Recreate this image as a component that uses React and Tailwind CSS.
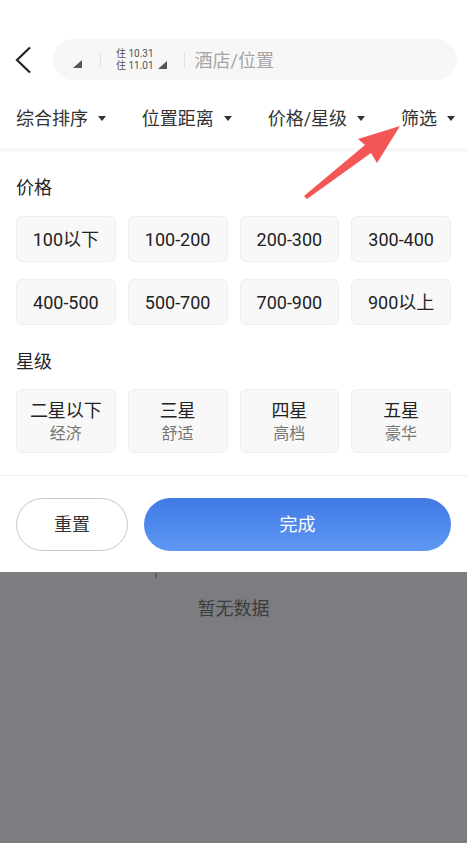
import React from "react";

const prices = ["100以下", "100-200", "200-300", "300-400", "400-500", "500-700", "700-900", "900以上"];
const stars = [
    { name: "二星以下", sub: "经济" },
    { name: "三星", sub: "舒适" },
    { name: "四星", sub: "高档" },
    { name: "五星", sub: "豪华" },
];
const tabs = ["综合排序", "位置距离", "价格/星级", "筛选"];

const Corner = () => (
    <svg width="9" height="8" viewBox="0 0 9 8" className="shrink-0">
        <polygon points="9,0 9,8 0,8" fill="#555" />
    </svg>
);

const Caret = () => (
    <svg width="8" height="5" viewBox="0 0 8 5" className="shrink-0">
        <polygon points="0,0 8,0 4,5" fill="#333" />
    </svg>
);

const App = () => {
    return (
        <div className="relative w-[467px] h-[843px] bg-white flex flex-col overflow-hidden font-['Roboto','Noto_Sans_CJK_SC',sans-serif]">
            {/* Header */}
            <div className="flex items-center pt-[39px] pl-[14px] pr-[10px]">
                <svg width="20" height="28" viewBox="0 0 20 28" className="shrink-0">
                    <polyline points="16,1.5 3,14 16,26.5" fill="none" stroke="#222" strokeWidth="2.2" />
                </svg>
                <div className="ml-[19px] flex-1 h-[41px] rounded-full bg-[#f7f7f7] flex items-center">
                    <div className="ml-[20px] mt-[9px]">
                        <Corner />
                    </div>
                    <div className="ml-[18px] w-px h-[16px] bg-[#e2e2e2]" />
                    <div className="ml-[15px] flex items-center">
                        <div className="flex flex-col text-[10px] leading-[12px] text-[#555]">
                            <span>住 10.31</span>
                            <span>住 11.01</span>
                        </div>
                        <div className="ml-[4px] mt-[10px]">
                            <Corner />
                        </div>
                    </div>
                    <div className="ml-[17px] w-px h-[16px] bg-[#e2e2e2]" />
                    <span className="ml-[10px] pt-[2px] text-[18px] text-[#a5a5a5]">酒店/位置</span>
                </div>
            </div>

            {/* Tabs */}
            <div className="mt-[16px] h-[44px] flex items-center justify-between pl-[16px] pr-[12px]">
                {tabs.map((t) => (
                    <div key={t} className="flex items-center gap-[10px] text-[18px] text-[#333]">
                        <span>{t}</span>
                        <Caret />
                    </div>
                ))}
            </div>
            <div className="mt-[8px] h-[4px] bg-[#f5f7fa]" />

            {/* Filter panel */}
            <div className="bg-white rounded-b-[4px] px-[16px] pt-[24px] pb-[21px]">
                <div className="text-[18px] leading-[24px] text-[#222]">价格</div>
                <div className="mt-[16px] grid grid-cols-4 gap-x-3 gap-y-[17px]">
                    {prices.map((p) => (
                        <div key={p} className="h-[46px] rounded-[6px] bg-[#f8f8f8] border border-[#eeeeee] flex items-center justify-center text-[18px] text-[#222]">
                            {p}
                        </div>
                    ))}
                </div>
                <div className="mt-[25px] text-[18px] leading-[24px] text-[#222]">星级</div>
                <div className="mt-[15px] grid grid-cols-4 gap-x-3">
                    {stars.map((s) => (
                        <div key={s.name} className="h-[64px] pt-[2px] rounded-[6px] bg-[#f8f8f8] border border-[#eeeeee] flex flex-col items-center justify-center">
                            <span className="text-[18px] leading-[24px] text-[#222]">{s.name}</span>
                            <span className="text-[16px] leading-[22px] text-[#777]">{s.sub}</span>
                        </div>
                    ))}
                </div>
                <div className="mt-[22px] -mx-[16px] h-px bg-[#eeeeee]" />
                <div className="mt-[22px] flex items-center gap-[16px]">
                    <button className="w-[112px] h-[53px] rounded-full border border-[#c8c8c8] bg-white text-[18px] text-[#333]">
                        重置
                    </button>
                    <button className="flex-1 h-[53px] rounded-full bg-gradient-to-b from-[#4179e6] to-[#5e98f2] text-[18px] text-white">
                        完成
                    </button>
                </div>
            </div>

            {/* Dimmed area */}
            <div className="flex-1 bg-[#7c7d80] flex flex-col">
                <div className="ml-[155px] mt-[1px] w-[2px] h-[5px] bg-[#606063]" />
                <div className="mt-[18px] text-center text-[18px] leading-[26px] text-[#3c3c3e]">暂无数据</div>
            </div>

            {/* Annotation arrow */}
            <svg className="absolute left-0 top-0 pointer-events-none" width="467" height="843" viewBox="0 0 467 843">
                <polygon
                    points="400,126 377,163 371,153 307,199 304,196 365,145 358,139"
                    fill="#f45656"
                />
            </svg>
        </div>
    );
};

export default App;
